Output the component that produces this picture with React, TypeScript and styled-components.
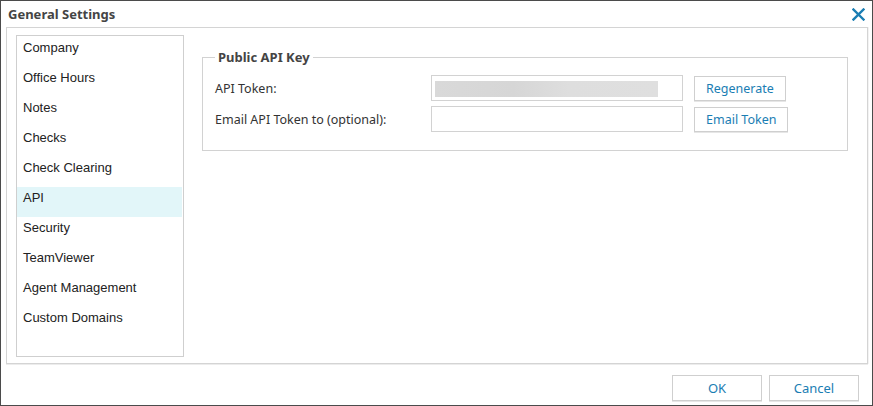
import styled, { createGlobalStyle } from 'styled-components';

const GlobalStyle = createGlobalStyle`
  html, body {
    margin: 0;
    padding: 0;
    background: #ffffff;
  }
  * {
    box-sizing: border-box;
  }
`;

const uiFont = `"Noto Sans", "DejaVu Sans", sans-serif`;
const listFont = `"Liberation Sans", Arial, sans-serif`;
const linkBlue = '#1a7db3';

const menuItems = [
  'Company',
  'Office Hours',
  'Notes',
  'Checks',
  'Check Clearing',
  'API',
  'Security',
  'TeamViewer',
  'Agent Management',
  'Custom Domains',
];

const App = () => {
  return (
    <>
      <GlobalStyle />
      <Dialog>
        <TitleBar>
          <Title>General Settings</Title>
          <CloseButton aria-label="Close">
            <svg width="13" height="13" viewBox="0 0 13 13">
              <path d="M1.5 1.5 L11.5 11.5 M11.5 1.5 L1.5 11.5" stroke={linkBlue} strokeWidth="2.4" strokeLinecap="square" />
            </svg>
          </CloseButton>
        </TitleBar>
        <Body>
          <SideNav>
            {menuItems.map((item) => (
              <NavItem key={item} $active={item === 'API'}>
                {item}
              </NavItem>
            ))}
          </SideNav>
          <Content>
            <Group>
              <Legend>Public API Key</Legend>
              <Row>
                <Label>API Token:</Label>
                <Field>
                  <Masked />
                </Field>
                <ActionButton>Regenerate</ActionButton>
              </Row>
              <Row>
                <Label>Email API Token to (optional):</Label>
                <Field />
                <ActionButton>Email Token</ActionButton>
              </Row>
            </Group>
          </Content>
        </Body>
        <Footer>
          <FooterButton>OK</FooterButton>
          <FooterButton>Cancel</FooterButton>
        </Footer>
      </Dialog>
    </>
  );
};
export default App;

const Dialog = styled.div`
  width: 873px;
  height: 406px;
  border: 1px solid #4b4b4b;
  display: flex;
  flex-direction: column;
  background: #fff;
  font-family: ${uiFont};
  color: #333;
`;

const TitleBar = styled.div`
  height: 26px;
  display: flex;
  align-items: center;
  justify-content: space-between;
  padding: 0 7px 0 7px;
`;

const Title = styled.div`
  font-weight: 700;
  font-size: 13px;
  color: #444;
`;

const CloseButton = styled.div`
  display: flex;
  align-items: center;
  margin-top: 1px;
`;

const Body = styled.div`
  margin: 0 4px 0 5px;
  height: 337px;
  border: 1px solid #d4d4d4;
  box-shadow: 0 1px 0 #ececec, 1px 0 0 #f3f3f3;
  display: flex;
  padding: 7px 19px 6px 9px;
  gap: 18px;
`;

const SideNav = styled.div`
  width: 168px;
  border: 1px solid #cfcfcf;
  padding: 1px 1px 0 0;
  display: flex;
  flex-direction: column;
`;

const NavItem = styled.div<{ $active?: boolean }>`
  height: 30px;
  padding: 3px 6px 0;
  font-family: ${listFont};
  font-size: 13px;
  line-height: 16px;
  color: #222;
  background: ${(p) => (p.$active ? '#e2f6f9' : 'transparent')};
`;

const Content = styled.div`
  flex: 1;
  padding-top: 13px;
`;

const Group = styled.fieldset`
  margin: 0;
  border: 1px solid #d2d2d2;
  padding: 9px 12px 18px;
  display: flex;
  flex-direction: column;
  gap: 5px;
`;

const Legend = styled.legend`
  padding: 0 3px;
  font-weight: 700;
  font-size: 13px;
  color: #444;
`;

const Row = styled.div`
  display: flex;
  align-items: center;
`;

const Label = styled.div`
  width: 216px;
  font-size: 12.5px;
  color: #333;
`;

const Field = styled.div`
  width: 252px;
  height: 26px;
  border: 1px solid #d2d2d2;
  padding: 5px 3px;
`;

const Masked = styled.div`
  width: 223px;
  height: 16px;
  background: linear-gradient(90deg, #d9d9d9 0%, #d6d6d6 35%, #dedede 60%, #dfdfdf 100%);
`;

const ActionButton = styled.button`
  margin-left: 11px;
  height: 25px;
  padding: 0 11px;
  background: #fff;
  border: 1px solid #cfcfcf;
  box-shadow: 0 1px 0 #e6e6e6;
  font-family: ${uiFont};
  font-size: 12.5px;
  color: ${linkBlue};
`;

const Footer = styled.div`
  flex: 1;
  display: flex;
  justify-content: flex-end;
  align-items: flex-start;
  gap: 7px;
  padding: 11px 13px 0 0;
`;

const FooterButton = styled.button`
  width: 90px;
  height: 26px;
  background: #fff;
  border: 1px solid #cfcfcf;
  box-shadow: 0 1px 0 #e6e6e6;
  font-family: ${uiFont};
  font-size: 13px;
  color: ${linkBlue};
`;
